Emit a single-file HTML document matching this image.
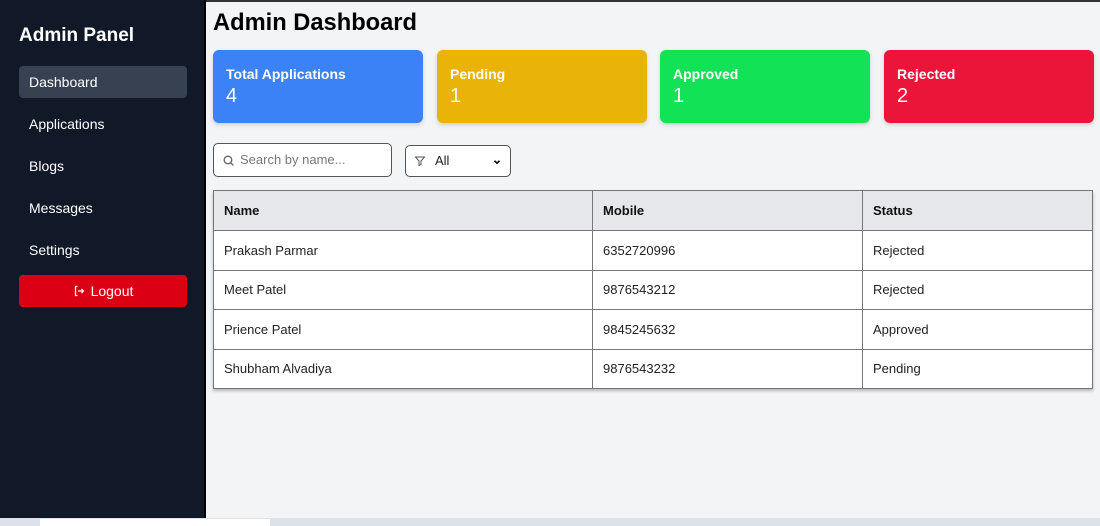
<!DOCTYPE html>
<html><head><style>
*{box-sizing:border-box;margin:0;padding:0}
body{width:1100px;height:526px;overflow:hidden;font-family:"Liberation Sans",sans-serif;background:#f3f4f6;position:relative}
.top{position:absolute;left:0;top:0;width:1100px;height:2px;background:#333}
.side{position:absolute;left:0;top:0;width:206px;height:518px;background:#111827;border-right:2px solid #000}
.side h2{position:absolute;left:19px;top:25px;color:#fff;font-size:19px;font-weight:bold}
.nav{position:absolute;left:19px;width:168px;height:32px;color:#fff;font-size:14px;padding-left:10px;line-height:32px;border-radius:4px}
.act{background:#374151}
.logout{position:absolute;left:19px;top:275px;width:168px;height:32px;background:#dc0014;border-radius:4px;color:#fff;font-size:14px;text-align:center;line-height:32px}
h1{position:absolute;left:213px;top:10px;font-size:23.7px;font-weight:bold;color:#000}
.card{position:absolute;top:50px;width:210px;height:73px;border-radius:6px;color:#fff;padding:16px 13px;box-shadow:0 2px 4px rgba(0,0,0,.15)}
.card b{display:block;font-size:14px}
.card span{display:block;font-size:20px;margin-top:3px}
.search{position:absolute;left:213px;top:143px;width:179px;height:34px;border:1px solid #555;border-radius:5px;background:#fff;font-size:13px;color:#777;line-height:32px;padding-left:26px}
.filter{position:absolute;left:405px;top:145px;width:106px;height:32px;border:1px solid #555;border-radius:5px;background:#fff;font-size:13px;line-height:30px;padding-left:29px;color:#222}
table{position:absolute;left:213px;top:190px;width:880px;border-collapse:collapse;background:#fff;box-shadow:0 2px 3px rgba(0,0,0,.25);font-size:13px;color:#222}
td,th{border:1px solid #777;height:39.5px;padding-left:10px;text-align:left}
th{background:#e5e7eb;font-weight:bold;color:#111;height:40px}
.task{position:absolute;left:0;top:518px;width:1100px;height:8px;background:#dde1ea}
</style></head><body>
<div class="top"></div>
<div class="side">
<h2>Admin Panel</h2>
<div class="nav act" style="top:66px">Dashboard</div>
<div class="nav" style="top:108px">Applications</div>
<div class="nav" style="top:150px">Blogs</div>
<div class="nav" style="top:192px">Messages</div>
<div class="nav" style="top:234px">Settings</div>
<div class="logout"><svg width="12" height="12" viewBox="0 0 24 24" fill="none" stroke="#fff" stroke-width="2.5" style="vertical-align:-1px;margin-right:6px"><path d="M9 3H5v18h4M10 12h11M17 8l4 4-4 4"/></svg>Logout</div>
</div>
<h1>Admin Dashboard</h1>
<div class="card" style="left:213px;background:#3b82f6"><b>Total Applications</b><span>4</span></div>
<div class="card" style="left:437px;background:#eab308"><b>Pending</b><span>1</span></div>
<div class="card" style="left:660px;background:#12e356"><b>Approved</b><span>1</span></div>
<div class="card" style="left:884px;background:#ea1539"><b>Rejected</b><span>2</span></div>
<div class="search"><svg width="13" height="13" viewBox="0 0 24 24" fill="none" stroke="#666" stroke-width="2.5" style="position:absolute;left:8px;top:10px"><circle cx="11" cy="11" r="7"/><path d="M16 16l5 5"/></svg>Search by name...</div>
<div class="filter"><svg width="12" height="12" viewBox="0 0 24 24" fill="none" stroke="#555" stroke-width="2" style="position:absolute;left:8px;top:9px"><path d="M3 4h18l-7 8v7l-4 2v-9z"/></svg>All<svg width="10" height="10" viewBox="0 0 24 24" fill="none" stroke="#111" stroke-width="4" style="position:absolute;left:86px;top:11px"><path d="M6 9l6 6 6-6"/></svg></div>
<table>
<tr><th style="width:379px">Name</th><th style="width:270px">Mobile</th><th>Status</th></tr>
<tr><td>Prakash Parmar</td><td>6352720996</td><td>Rejected</td></tr>
<tr><td>Meet Patel</td><td>9876543212</td><td>Rejected</td></tr>
<tr><td>Prience Patel</td><td>9845245632</td><td>Approved</td></tr>
<tr><td>Shubham Alvadiya</td><td>9876543232</td><td>Pending</td></tr>
</table>
<div class="task"><div style="position:absolute;left:40px;top:1px;width:230px;height:7px;background:#fff"></div></div>
</body></html>
